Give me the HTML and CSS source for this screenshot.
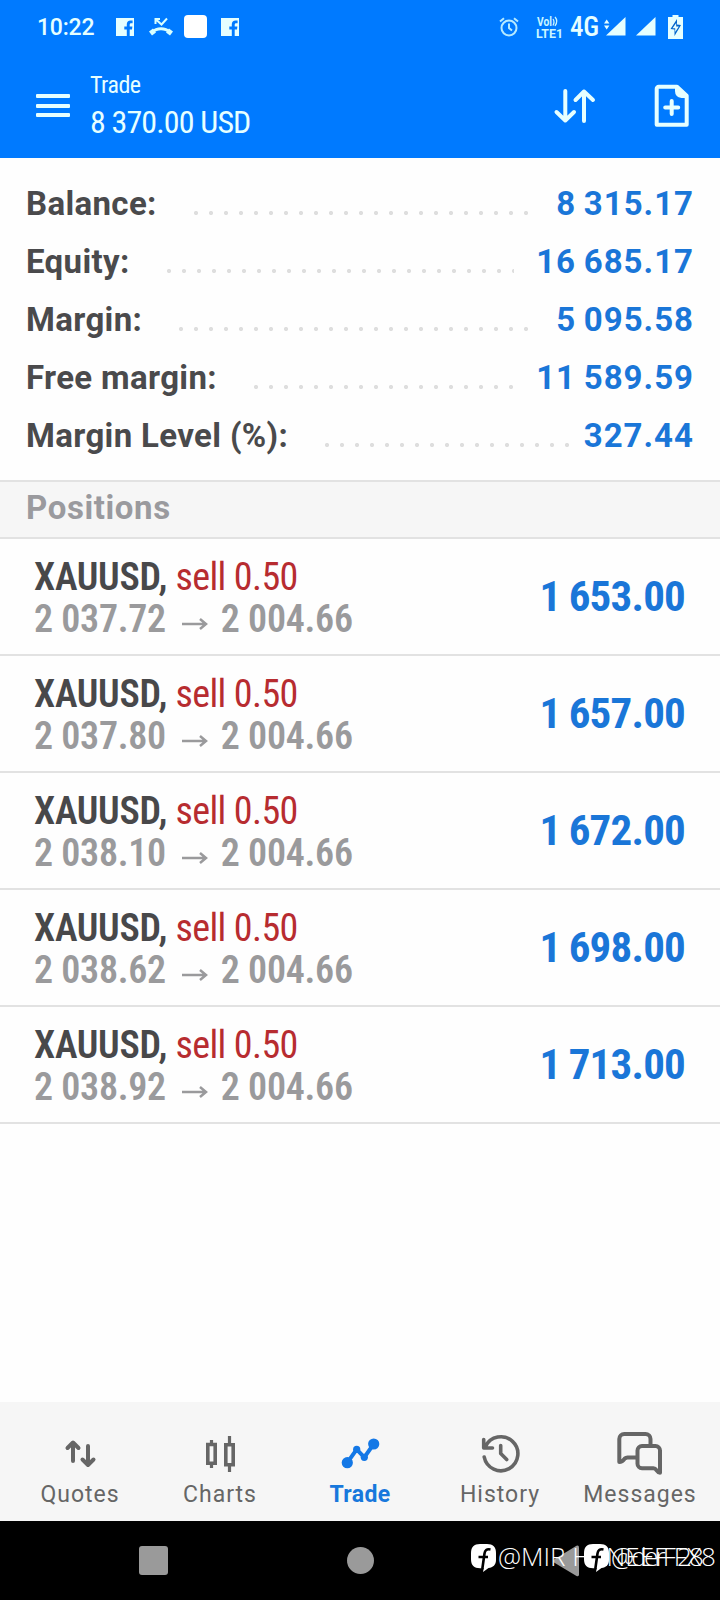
FILE: index.html
```
<!DOCTYPE html>
<html lang="en">
<head>
<meta charset="utf-8">
<title>Trade</title>
<link rel="stylesheet" href="styles.css">
</head>
<body>
<svg class="defs" width="0" height="0">
  <symbol id="fb" viewBox="0 0 18 18"><path fill="#e6ffff" d="M0 0h18v18h-4.300v-6.500h2.300l.4-2.900h-2.700V6.800c0-1 .4-1.600 1.500-1.600h1.400V2.600c-.5-.1-1.200-.2-2-.2-2.400 0-3.800 1.400-3.800 3.900v2.300H8.300v2.900h2.500V18H0z"/></symbol>
  <symbol id="chat" viewBox="0 0 25 28"><path fill="#fff" d="M9 0h7c6 0 9 3 9 9v7c0 5-3 7.500-7.500 8L12 28l.8-3.700H9c-6 0-9-3-9-9V9c0-6 3-9 9-9z"/><path fill="none" stroke="#000" stroke-width="2.600" d="M19.500 5.500c-4-.8-5.500.8-6 4L11.300 25M7.500 13h9.500"/></symbol>
</svg>

<header class="header">
  <div class="status">
    <span class="clock">10:22</span>
    <div class="notices">
      <svg width="18" height="18"><use href="#fb"/></svg>
      <svg width="24" height="20" viewBox="0 0 24 20"><g fill="none" stroke="#d8ffff"><path stroke-width="2" d="M6.500 7V2H11M7 2.500l5.500 5L18 1.500"/><path stroke-width="3" d="M3 15.500c5-5 13-5 18 0"/><path stroke-width="5" d="M1.500 16.500l4-3M22.500 16.500l-4-3"/></g></svg>
      <i class="notice-square"></i>
      <svg width="18" height="18"><use href="#fb"/></svg>
    </div>
    <div class="signals">
      <svg class="alarm" width="20" height="20" viewBox="0 0 20 20" fill="none" stroke="#b5eaff" stroke-width="2"><circle cx="10" cy="11" r="7.500"/><path d="M10 6.500V11l3 2.500M1 4.500l4-3.300M19 4.500l-4-3.300"/></svg>
      <svg class="volte" width="28" height="24" viewBox="0 0 28 24"><text x="1" y="11" textLength="15" lengthAdjust="spacingAndGlyphs">Vol</text><path d="M17 4q2 3 0 6.500M19 2q3.500 4 0 9" fill="none" stroke="#c9f6ff" stroke-width="1.300"/><text x="0" y="22.500" textLength="27" lengthAdjust="spacingAndGlyphs">LTE1</text></svg>
      <span class="net">4G</span>
      <svg class="sig1" width="22" height="20" viewBox="0 0 22 20" fill="#e6ffff"><path d="M21.500 0v18.500H2zM0 6.500l2.700-4 2.700 4zM0 8.500l2.700 4 2.700-4z"/></svg>
      <svg class="sig2" width="20" height="20" viewBox="0 0 20 20" fill="#e6ffff"><path d="M19.500 0v18.500H0z"/></svg>
      <svg class="battery" width="15" height="24" viewBox="0 0 15 24"><path fill="#e6ffff" d="M4.500 0h6v2H15v22H0V2h4.500z"/><path fill="#06c" d="M9 4v5.500l4 .5-6.500 11v-6.500L2.500 14z"/><path fill="#e6ffff" d="M8.200 8v3.500h2.600L7.200 17v-3.800H4.500z"/></svg>
    </div>
  </div>
  <div class="appbar">
    <div class="menu"><i></i><i></i><i></i></div>
    <div class="titles">
      <div class="title">Trade</div>
      <div class="total">8 370.00 USD</div>
    </div>
    <svg class="sort" width="44" height="40" viewBox="0 0 44 40"><path d="M12.300 5v29M3.500 26l8.800 8.500L21 26M31 35V5.500M22.500 14L31 5.500l9 8.500"/></svg>
    <svg class="neworder" width="36" height="44" viewBox="0 0 36 44"><path d="M4.700 2.800H23l9.700 9V40.700h-30V4.800a2 2 0 0 1 2-2zM17.700 30V17M11.200 23.500h13"/><path class="fold" d="M21 3h3l9 9v2h-5.500q-6.500-1-6.500-7z"/></svg>
  </div>
</header>

<section class="summary">
  <div class="row"><span>Balance:</span><i class="leader"></i><b>8 315.17</b></div>
  <div class="row"><span>Equity:</span><i class="leader"></i><b>16 685.17</b></div>
  <div class="row"><span>Margin:</span><i class="leader"></i><b>5 095.58</b></div>
  <div class="row"><span>Free margin:</span><i class="leader"></i><b>11 589.59</b></div>
  <div class="row"><span>Margin Level (%):</span><i class="leader short"></i><b>327.44</b></div>
</section>

<h2 class="section">Positions</h2>
<main class="positions">
  <div class="pos"><div><div class="sym">XAUUSD, <span>sell 0.50</span></div><div class="quote">2 037.72<svg class="arrow" viewBox="0 0 26 12"><path d="M0 6h23M18 1l6 5-6 5"/></svg>2 004.66</div></div><div class="profit">1 653.00</div></div>
  <div class="pos"><div><div class="sym">XAUUSD, <span>sell 0.50</span></div><div class="quote">2 037.80<svg class="arrow" viewBox="0 0 26 12"><path d="M0 6h23M18 1l6 5-6 5"/></svg>2 004.66</div></div><div class="profit">1 657.00</div></div>
  <div class="pos"><div><div class="sym">XAUUSD, <span>sell 0.50</span></div><div class="quote">2 038.10<svg class="arrow" viewBox="0 0 26 12"><path d="M0 6h23M18 1l6 5-6 5"/></svg>2 004.66</div></div><div class="profit">1 672.00</div></div>
  <div class="pos"><div><div class="sym">XAUUSD, <span>sell 0.50</span></div><div class="quote">2 038.62<svg class="arrow" viewBox="0 0 26 12"><path d="M0 6h23M18 1l6 5-6 5"/></svg>2 004.66</div></div><div class="profit">1 698.00</div></div>
  <div class="pos"><div><div class="sym">XAUUSD, <span>sell 0.50</span></div><div class="quote">2 038.92<svg class="arrow" viewBox="0 0 26 12"><path d="M0 6h23M18 1l6 5-6 5"/></svg>2 004.66</div></div><div class="profit">1 713.00</div></div>
</main>

<nav class="tabs">
  <div class="tab"><svg viewBox="0 0 48 48"><path stroke-width="4" stroke-linecap="round" stroke-linejoin="round" d="M17 31V13M11.500 18l5.500-5.500 5.500 5.500M32 16v18M26.500 29.500L32 35l5.500-5.500"/></svg><span>Quotes</span></div>
  <div class="tab"><svg viewBox="0 0 48 48"><path stroke-width="3.600" d="M11.800 14.500h7.400v18.700h-7.400zM29.800 14.800h7.400v19.900h-7.400z"/><path stroke-width="3.200" d="M15.500 10v4M15.500 33v5M33.500 6v8M33.500 35v7"/></svg><span>Charts</span></div>
  <div class="tab active"><svg viewBox="0 0 48 48"><path stroke-width="4" d="M11.300 32.700l9.400-13.400 7.600 8L37.700 14"/><g fill="#1478e6" stroke="none"><circle cx="11.300" cy="32.700" r="5.600"/><circle cx="20.700" cy="19.300" r="3.600"/><circle cx="28.300" cy="27.300" r="3.600"/><circle cx="37.700" cy="14" r="5.600"/></g></svg><span>Trade</span></div>
  <div class="tab"><svg viewBox="0 0 48 48"><path stroke-width="3.600" stroke-linecap="round" stroke-linejoin="round" d="M7.700 9.500V18h8.800M9.500 16.500A17 17 0 1 1 8.200 27M24.700 15.500v8l6 6"/></svg><span>History</span></div>
  <div class="tab"><svg viewBox="0 0 48 48"><path stroke-width="4" stroke-linejoin="round" d="M34.500 15V9a5 5 0 0 0-5-5H8.300a5 5 0 0 0-5 5V32c3.200 0 3.700-1 5.500-3.500 1-1 1.700-1 2.700-1H20M26 16h13.500a4.500 4.500 0 0 1 4.500 4.500v22.300c-3.500 0-3.200-4.600-6.500-4.600H26a4.500 4.500 0 0 1-4.500-4.500V20.500A4.500 4.500 0 0 1 26 16z"/></svg><span>Messages</span></div>
</nav>

<footer class="sysnav">
  <i class="recent"></i><i class="home"></i>
  <svg width="27" height="32" viewBox="0 0 27 32"><path fill="#9a9a9a" d="M1 14.500L23.500.8Q26 0 26 2.500v27q0 2.500-2.500 1.500L1 17.500q-1.500-1.500 0-3z"/></svg>
  <div class="mark first"><svg width="25" height="28"><use href="#chat"/></svg><span>@MIR HANEEF FX</span></div>
  <div class="mark second"><svg width="25" height="28"><use href="#chat"/></svg><span>@derF 288</span></div>
</footer>
</body>
</html>
```
FILE: styles.css
```
* { box-sizing: border-box; }
body {
  margin: 0;
  width: 720px;
  height: 1600px;
  display: flex;
  flex-direction: column;
  overflow: hidden;
  background: #fefefe;
  font-family: Roboto, "Liberation Sans", sans-serif;
}
svg { display: block; flex: none; overflow: visible; }
.defs { position: absolute; }

.header { height: 158px; flex: none; background: #007aff; color: #e6ffff; }
.status { height: 53px; display: flex; align-items: center; padding: 0 37px 0 37px; }
.clock { width: 79px; font-size: 23px; font-weight: 500; letter-spacing: -.2px; padding-top: 1px; }
.notices { display: flex; align-items: center; }
.notices svg:nth-child(2) { margin: 0 11px 0 15px; }
.notice-square { width: 23px; height: 23px; border-radius: 4px; background: #fff; margin-right: 14px; }
.signals { display: flex; align-items: center; margin-left: auto; }
.volte { margin-left: 17px; fill: #c9f6ff; font-size: 13px; font-weight: 700; }
.net { margin-left: 6px; width: 31px; font-size: 27px; font-weight: 500; font-stretch: 75%; letter-spacing: -.3px; line-height: 30px; }
.sig1 { margin-left: 3px; }
.sig2 { margin-left: 10px; }
.battery { margin-left: 12px; }

.appbar { height: 104px; display: flex; align-items: center; padding: 0 30px 0 36px; }
.menu { width: 34px; height: 23px; display: flex; flex-direction: column; justify-content: space-between; margin-top: 1px; }
.menu i { height: 4px; border-radius: 1px; background: #e6ffff; }
.titles { margin-left: 20px; flex: 1; font-family: "Roboto Condensed", Roboto, sans-serif; font-stretch: 75%; padding-top: 3px; }
.title { font-size: 24px; line-height: 32px; letter-spacing: -.5px; font-weight: 450; }
.total { font-size: 32px; line-height: 43px; letter-spacing: -.85px; font-weight: 450; }
.appbar path { fill: none; stroke: #e6ffff; stroke-width: 4; stroke-linecap: round; stroke-linejoin: round; }
.sort { margin: 2px 57px 0 0; }
.neworder { margin-top: 2px; }
.appbar .fold { fill: #e6ffff; stroke: none; }

.summary { height: 322px; flex: none; padding: 16.500px 27px 0 26px; }
.row { height: 58px; display: flex; align-items: center; font-size: 33px; font-weight: 700; letter-spacing: .35px; color: #4a4a4c; white-space: nowrap; }
.row b { font-weight: 700; color: #1a76d8; letter-spacing: 1px; margin-right: -1px; word-spacing: -1.500px; }
.leader {
  flex: 1;
  height: 4px;
  margin: 18px 22px 0 37px;
  background: radial-gradient(circle at 2px 2px, #dedede 1.700px, transparent 2.400px) 0 0 / 15px 4px repeat-x;
}
.leader.short { margin-right: 13px; }

.section {
  height: 59px;
  flex: none;
  margin: 0;
  padding: 0 26px;
  background: #f6f6f6;
  border: solid #e2e2e2;
  border-width: 2px 0;
  font-size: 33px;
  font-weight: 700;
  line-height: 52px;
  letter-spacing: .6px;
  color: #9a9a9e;
}
.positions { flex: 1; font-family: "Roboto Condensed", Roboto, sans-serif; font-stretch: 75%; }
.pos { height: 117px; display: flex; justify-content: space-between; padding: 17px 35px 0 34px; border-bottom: 2px solid #e2e2e2; white-space: nowrap; }
.sym, .quote { height: 42px; line-height: 42px; font-size: 38px; font-weight: 650; letter-spacing: -.3px; }
.sym { color: #48484a; }
.sym span { font-weight: 400; color: #b72c30; letter-spacing: -.6px; }
.quote { display: flex; color: #9a9a9c; }
.arrow { width: 26px; height: 12px; margin: 20px 13px 0 16px; fill: none; stroke: #9a9a9c; stroke-width: 2.500; }
.profit { font-size: 43px; font-weight: 700; line-height: 81px; letter-spacing: -.8px; word-spacing: -1px; color: #1a76d8; }

.tabs { height: 119px; flex: none; display: grid; grid-template-columns: repeat(5, 140px); justify-content: center; background: #f6f6f6; padding-top: 28px; }
.tab { display: flex; flex-direction: column; align-items: center; color: #666; font-size: 23px; letter-spacing: 1px; }
.tab svg { width: 48px; height: 48px; fill: none; stroke: #666; margin-bottom: 3px; }
.tab span { line-height: 28px; }
.active { color: #1878dc; font-weight: 700; letter-spacing: .4px; }
.active svg { stroke: #1478e6; }

.sysnav { position: relative; height: 79px; flex: none; display: grid; grid-template-columns: repeat(3, 206.500px); justify-content: center; place-items: center; background: #000; }
.recent { width: 29px; height: 29px; border-radius: 3px; background: #9a9a9a; }
.home { width: 27px; height: 27px; border-radius: 50%; background: #9a9a9a; }
.mark { position: absolute; top: 21px; height: 32px; display: flex; align-items: center; gap: 2px; color: #fff; font: 350 26px/29px "Open Sans", "Noto Sans", sans-serif; white-space: nowrap; }
.mark span { height: 32px; }
.first { left: 471px; letter-spacing: 0; }
.second { left: 584px; letter-spacing: -2.800px; }
```
